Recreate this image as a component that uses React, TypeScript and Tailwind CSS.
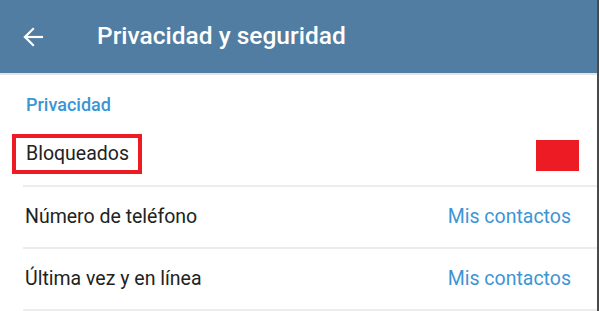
import React from 'react';

const rows = [
  { label: 'Número de teléfono', value: 'Mis contactos' },
  { label: 'Última vez y en línea', value: 'Mis contactos' },
];

export default function App() {
  return (
    <div className="w-[599px] h-[311px] overflow-hidden bg-white flex font-['Roboto',sans-serif]">
      <div className="flex-1 flex flex-col">
        {/* Toolbar */}
        <div className="h-[73px] bg-[#527da3] flex items-center shrink-0">
          <div className="w-[97px] flex items-center pl-[23px]">
            <svg width="20" height="20" viewBox="0 0 20 20" fill="none" stroke="white" strokeWidth="2.2" strokeLinecap="square">
              <path d="M19 10H2" />
              <path d="M10 2L2 10L10 18" />
            </svg>
          </div>
          <h1 className="text-white text-[24.5px] font-medium leading-none pb-[1px]">Privacidad y seguridad</h1>
        </div>
        <div className="h-[2px] bg-[#e4e4e4] shrink-0" />

        {/* Section */}
        <div className="h-[48px] pl-[26px] pt-[19px] shrink-0">
          <span className="text-[#3a95d5] text-[18px] font-medium leading-5">Privacidad</span>
        </div>

        <div className="h-[62px] flex items-center justify-between pl-[12px] pr-[18px]">
          <div className="border-4 border-[#ed1c24] h-[40px] flex items-center pl-[10px] pr-[9px]">
            <span className="text-[#222] text-[19.5px]">Bloqueados</span>
          </div>
          <div className="w-[43px] h-[31px] bg-[#ed1c24] mt-[2px]" />
        </div>
        <div className="ml-[23px] h-[2px] bg-[#ececec]" />

        {rows.map((r) => (
          <div key={r.label}>
            <div className="h-[60px] flex items-center justify-between pl-[25px] pr-[26px]">
              <span className="text-[#222] text-[19.5px]">{r.label}</span>
              <span className="text-[#3d95d6] text-[19.5px]">{r.value}</span>
            </div>
            <div className="ml-[23px] h-[2px] bg-[#ececec]" />
          </div>
        ))}
      </div>
      <div className="w-[2px] bg-[#4a4a4a] shrink-0" />
    </div>
  );
}
